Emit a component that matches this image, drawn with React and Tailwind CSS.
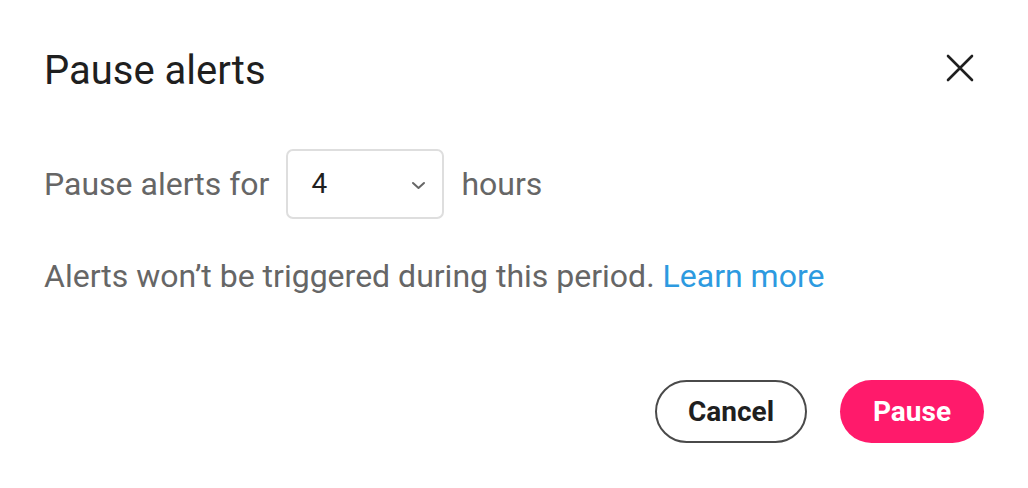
import { useState } from 'react';

const App = () => {
  const [hours, setHours] = useState('4');

  return (
    <div className="w-[1028px] h-[488px] bg-white font-['Roboto',sans-serif] pl-[44px] pr-[44px] pt-[47px]">
      <div className="flex items-start justify-between">
        <h1 className="text-[40px] leading-[48px] text-[#1f1f1f] font-normal">Pause alerts</h1>
        <button className="mt-[5px] mr-[8px] w-[32px] h-[32px] flex items-center justify-center text-[#1f1f1f]">
          <svg width="28" height="28" viewBox="0 0 28 28" fill="none" stroke="currentColor" strokeWidth="2.6" strokeLinecap="round">
            <path d="M2 2L26 26M26 2L2 26" />
          </svg>
        </button>
      </div>

      <div className="mt-[54px] flex items-center gap-[17px] text-[32px] text-[#666666]">
        <span>Pause alerts for</span>
        <div className="relative w-[158px] h-[70px] border-2 border-[#dedede] rounded-[7px] flex items-center pl-[23px]">
          <span className="text-[#1f1f1f] text-[28px]">{hours}</span>
          <svg className="absolute right-[16px] top-[30px]" width="15" height="9" viewBox="0 0 15 9" fill="none" stroke="#666" strokeWidth="2" strokeLinecap="round" strokeLinejoin="round">
            <path d="M2 2l5.5 5 5.5-5" />
          </svg>
        </div>
        <span>hours</span>
      </div>

      <p className="mt-[37px] text-[32px] leading-[40px] text-[#666666]">
        Alerts won’t be triggered during this period.{' '}
        <a href="#" className="text-[#2d9ae0]">Learn more</a>
      </p>

      <div className="mt-[84px] flex justify-end gap-[33px]">
        <button className="w-[152px] h-[63px] rounded-full border-2 border-[#4a4a4a] text-[28px] font-bold text-[#1f1f1f]">
          Cancel
        </button>
        <button
          onClick={() => setHours(hours)}
          className="w-[144px] h-[63px] rounded-full bg-[#ff1a6b] text-[28px] font-bold text-white"
        >
          Pause
        </button>
      </div>
    </div>
  );
};

export default App;
